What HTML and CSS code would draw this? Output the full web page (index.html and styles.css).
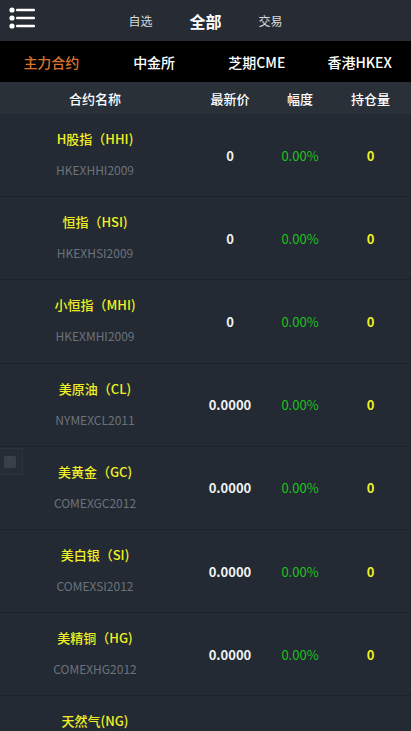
FILE: index.html
```html
<!DOCTYPE html>
<html lang="zh-CN">
<head>
  <meta charset="UTF-8" />
  <meta name="viewport" content="width=device-width, initial-scale=1.0"/>
  <title>行情</title>
  <link rel="stylesheet" href="styles.css">
</head>
<body>

  <div class="topbar">
    <svg class="menu" width="26" height="22" viewBox="0 0 26 22">
      <circle cx="3" cy="3" r="2.6" fill="#fff"/>
      <circle cx="3" cy="11" r="2.6" fill="#fff"/>
      <circle cx="3" cy="19" r="2.6" fill="#fff"/>
      <rect x="7" y="1.8" width="19" height="2.4" rx="1" fill="#fff"/>
      <rect x="7" y="9.8" width="19" height="2.4" rx="1" fill="#fff"/>
      <rect x="7" y="17.8" width="19" height="2.4" rx="1" fill="#fff"/>
    </svg>
    <nav class="topnav">
      <a>自选</a>
      <a class="active">全部</a>
      <a>交易</a>
    </nav>
  </div>

  <div class="tabs">
    <a class="active">主力合约</a>
    <a>中金所</a>
    <a>芝期CME</a>
    <a>香港HKEX</a>
  </div>

  <div class="thead">
    <span class="c-name">合约名称</span>
    <span class="c-price">最新价</span>
    <span class="c-amp">幅度</span>
    <span class="c-vol">持仓量</span>
  </div>

  <div class="list">
    <div class="row">
      <div class="c-name"><b>H股指（HHI)</b><small>HKEXHHI2009</small></div>
      <div class="c-price">0</div>
      <div class="c-amp">0.00%</div>
      <div class="c-vol">0</div>
    </div>
    <div class="row">
      <div class="c-name"><b>恒指（HSI)</b><small>HKEXHSI2009</small></div>
      <div class="c-price">0</div>
      <div class="c-amp">0.00%</div>
      <div class="c-vol">0</div>
    </div>
    <div class="row">
      <div class="c-name"><b>小恒指（MHI)</b><small>HKEXMHI2009</small></div>
      <div class="c-price">0</div>
      <div class="c-amp">0.00%</div>
      <div class="c-vol">0</div>
    </div>
    <div class="row">
      <div class="c-name"><b>美原油（CL)</b><small>NYMEXCL2011</small></div>
      <div class="c-price">0.0000</div>
      <div class="c-amp">0.00%</div>
      <div class="c-vol">0</div>
    </div>
    <div class="row">
      <div class="c-name"><b>美黄金（GC)</b><small>COMEXGC2012</small></div>
      <div class="c-price">0.0000</div>
      <div class="c-amp">0.00%</div>
      <div class="c-vol">0</div>
    </div>
    <div class="row">
      <div class="c-name"><b>美白银（SI)</b><small>COMEXSI2012</small></div>
      <div class="c-price">0.0000</div>
      <div class="c-amp">0.00%</div>
      <div class="c-vol">0</div>
    </div>
    <div class="row">
      <div class="c-name"><b>美精铜（HG)</b><small>COMEXHG2012</small></div>
      <div class="c-price">0.0000</div>
      <div class="c-amp">0.00%</div>
      <div class="c-vol">0</div>
    </div>
    <div class="row">
      <div class="c-name"><b>天然气(NG)</b><small>NYMEXNG2011</small></div>
      <div class="c-price">0.0000</div>
      <div class="c-amp">0.00%</div>
      <div class="c-vol">0</div>
    </div>
  </div>

  <div class="float-box"></div>

</body>
</html>
```

FILE: styles.css
```css
* {
  box-sizing: border-box;
  font-family: "Noto Sans CJK SC", "Noto Sans", sans-serif;
}

body {
  margin: 0;
  background: #232a33;
  color: #fff;
  overflow: hidden;
}

a {
  cursor: pointer;
}

.topbar {
  height: 41px;
  background: #272c34;
  display: flex;
  align-items: center;
  justify-content: center;
  position: relative;
}

.menu {
  position: absolute;
  left: 9px;
  top: 7px;
}

.topnav {
  display: flex;
  align-items: center;
  gap: 37px;
  font-size: 12px;
  color: #d8dadd;
  margin-left: 0;
}

.topnav .active {
  font-size: 16px;
  font-weight: bold;
  color: #fff;
}

.tabs {
  height: 41px;
  background: #000;
  display: grid;
  grid-template-columns: repeat(4, 1fr);
  align-items: center;
  text-align: center;
  font-size: 14px;
  font-weight: 500;
}

.tabs .active {
  color: #d9732c;
}

.thead {
  height: 32px;
  background: #2a3038;
  display: flex;
  align-items: center;
  font-size: 13px;
  font-weight: 500;
}

.c-name {
  width: 190px;
  text-align: center;
}

.c-price {
  width: 80px;
  text-align: center;
}

.c-amp {
  width: 60px;
  text-align: center;
}

.c-vol {
  flex: 1;
  text-align: center;
}

.row {
  height: 83.2px;
  display: flex;
  align-items: center;
  border-bottom: 1px solid #1d222a;
  font-size: 13px;
}

.row .c-name {
  display: flex;
  flex-direction: column;
  align-items: center;
  gap: 14px;
  padding-bottom: 2px;
}

.row b {
  color: #f0f024;
  font-weight: 500;
  font-size: 13px;
  line-height: 18px;
}

.row small {
  color: #6c727a;
  font-size: 12px;
  line-height: 16px;
}

.row .c-price {
  font-weight: bold;
  color: #f2f2f2;
}

.row .c-amp {
  color: #1ec21e;
}

.row .c-vol {
  color: #f0f024;
  font-weight: bold;
}

.float-box {
  position: absolute;
  left: 0;
  top: 448px;
  width: 23px;
  height: 27px;
  border: 1px solid #2c333c;
  border-left: none;
  background: #262c35;
}

.float-box::after {
  content: "";
  position: absolute;
  left: 4px;
  top: 7px;
  width: 12px;
  height: 12px;
  background: #39404a;
  border-radius: 2px;
}
```
